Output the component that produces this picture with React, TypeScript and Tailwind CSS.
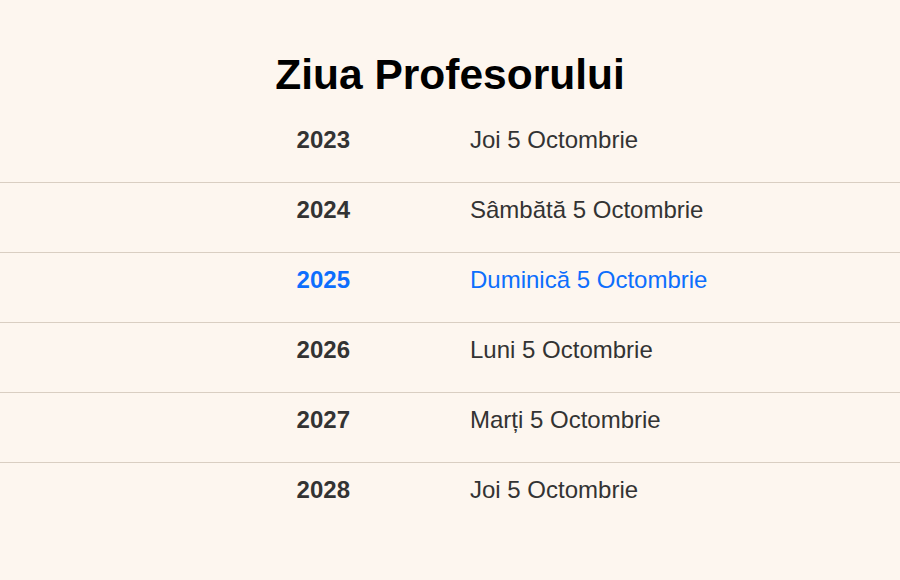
const rows = [
  { year: "2023", day: "Joi 5 Octombrie" },
  { year: "2024", day: "Sâmbătă 5 Octombrie" },
  { year: "2025", day: "Duminică 5 Octombrie", current: true },
  { year: "2026", day: "Luni 5 Octombrie" },
  { year: "2027", day: "Marți 5 Octombrie" },
  { year: "2028", day: "Joi 5 Octombrie" },
];

export default function App() {
  return (
    <div className="min-h-screen bg-[#fdf6ef] font-['Liberation_Sans',Arial,sans-serif] text-[#333333]">
      <h1 className="pt-[51px] text-center text-[42.5px] font-bold leading-[48px] text-black">
        Ziua Profesorului
      </h1>

      <div className="mt-[14px]">
        {rows.map((r, i) => (
          <div
            key={r.year}
            className={`flex h-[70px] pt-[13px] text-[24px] leading-[28px] ${
              i < rows.length - 1 ? "border-b border-[#d9cec2]" : ""
            } ${r.current ? "text-[#0d6efd]" : ""}`}
          >
            <div className="w-1/2 pr-[100px] text-right font-bold">{r.year}</div>
            <div className="w-1/2 pl-[20px]">{r.day}</div>
          </div>
        ))}
      </div>
    </div>
  );
}
